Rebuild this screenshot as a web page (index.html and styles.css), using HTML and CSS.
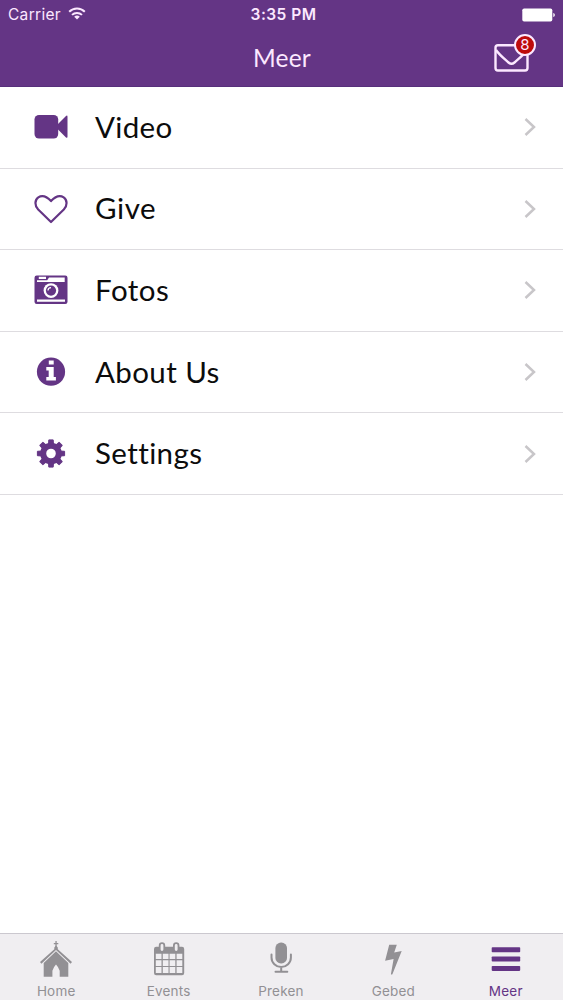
FILE: index.html
```html
<!DOCTYPE html>
<html lang="nl">
<head>
<meta charset="utf-8">
<title>Meer</title>
<link rel="stylesheet" href="styles.css">
</head>
<body>
<div class="screen">
  <header class="header">
    <div class="status">
      <div class="carrier"><span>Carrier</span>
        <svg class="wifi" width="18" height="13" viewBox="0 0 18 13" fill="none" stroke="currentColor" stroke-width="2"><path d="M1.200 4.800a11 11 0 0 1 15.600 0M4 7.900a7.200 7.200 0 0 1 10 0"/><path d="M6.200 9.800a4 4 0 0 1 5.600 0L9 12.500z" fill="currentColor" stroke="none"/></svg>
      </div>
      <div class="time">3:35 PM</div>
      <svg class="battery" width="34" height="14" viewBox="0 0 34 14" fill="currentColor"><rect x="0.300" y="0.500" width="30" height="13" rx="1.800"/><path d="M31.300 5c2 .5 2 3.500 0 4z"/></svg>
    </div>
    <div class="nav">
      <h1 class="title">Meer</h1>
      <button class="mail" aria-label="Mail">
        <svg width="36" height="28" viewBox="0 0 36 28" fill="none" stroke="currentColor" stroke-width="2.400" stroke-linejoin="round"><rect x="1.500" y="1.300" width="32" height="25.200" rx="2.500"/><path d="M2 6c3.500 5 8 8.500 12.500 12.500q3 2.600 6 0C25 14.500 29.500 11 33 6"/></svg>
        <span class="badge">8</span>
      </button>
    </div>
  </header>
  <main class="list">
    <a class="row">
      <svg class="icon" viewBox="0 0 34 34" fill="currentColor"><rect x="0.500" y="5" width="23.700" height="23.500" rx="4.500"/><path d="M23.500 14.500l8.500-8.600q1.500-1 1.500.8v20q0 1.800-1.500.8l-8.500-8.600z"/></svg>
      <span class="label video">Video</span><svg class="chevron" viewBox="0 0 12 20"><path d="M1.500 2l8.500 8-8.500 8"/></svg>
    </a>
    <a class="row">
      <svg class="icon" viewBox="0 0 34 34" fill="none" stroke="currentColor" stroke-width="2.200" stroke-linejoin="round"><path d="M17 30L4.200 17.500C.5 13.700.500 8 4.300 5.300 8.800 2.400 13 4.700 17 9.100 21 4.700 25.200 2.400 29.700 5.300c3.800 2.700 3.800 8.400.1 12.200z"/></svg>
      <span class="label give">Give</span><svg class="chevron" viewBox="0 0 12 20"><path d="M1.500 2l8.500 8-8.500 8"/></svg>
    </a>
    <a class="row">
      <svg class="icon" viewBox="0 0 34 34"><rect x="0.500" y="2.500" width="33" height="28.400" rx="2.200" fill="currentColor"/><path fill="#fff" d="M4.800 3.800H12v2.200H4.800zM15 4.600h15.700v4.500H3V7.300h10.200zM3 26.500h28v2.200H3z"/><circle cx="17" cy="17.600" r="7.400" fill="#fff"/><circle cx="17" cy="17.600" r="5.100" fill="currentColor"/><path d="M14 17.600a3 3 0 0 1 3-3" fill="none" stroke="#fff" stroke-width="1.200"/></svg>
      <span class="label fotos">Fotos</span><svg class="chevron" viewBox="0 0 12 20"><path d="M1.500 2l8.500 8-8.500 8"/></svg>
    </a>
    <a class="row">
      <svg class="icon" viewBox="0 0 34 34"><circle cx="17" cy="16.700" r="14.100" fill="currentColor"/><path fill="#fff" d="M14.800 5.400h4.900v4.200h-4.900zM12.300 12h7.400v10h2.200v3.600h-9.600V22h2.400v-6.400h-2.400z"/></svg>
      <span class="label about">About Us</span><svg class="chevron" viewBox="0 0 12 20"><path d="M1.500 2l8.500 8-8.500 8"/></svg>
    </a>
    <a class="row">
      <svg class="icon" viewBox="0 0 34 34" fill="none" stroke="currentColor"><circle cx="17" cy="16.500" r="7.800" stroke-width="6"/><g fill="currentColor" stroke-width="1" stroke-linejoin="round"><path id="teeth" d="M14.800 2.900h4.400l.3 5h-5zM14.800 30.100h4.400l.3-5h-5zM3.400 14.300v4.400l5 .3v-5zM30.600 14.300v4.400l-5 .3v-5z"/><use href="#teeth" transform="rotate(45 17 16.500)"/></g></svg>
      <span class="label settings">Settings</span><svg class="chevron" viewBox="0 0 12 20"><path d="M1.500 2l8.500 8-8.500 8"/></svg>
    </a>
  </main>
  <nav class="tabs">
    <a class="tab"><svg viewBox="0 0 36 38" fill="currentColor"><path d="M17.400 1h1.300v2h1.600v1.300h-1.600v3h-1.300v-3h-1.600V3h1.600z"/><path d="M16.300 7.500l1.700-2 1.800 2v1.800L34 22.100l-1.400 1.600L18 9.900 3.400 23.700 2 22.100 16.300 9.300z"/><path d="M18 11.300l12.300 11.600v13.900h-8.600v-6q-1-3.500-3.700-6.300-2.700 2.800-3.600 6.300v6H5.700V22.900z"/></svg><span class="home">Home</span></a>
    <a class="tab"><svg viewBox="0 0 36 38"><rect x="3" y="6.700" width="30.200" height="28.500" rx="2.200" fill="currentColor"/><path fill="#f0eef1" d="M4.800 13.800h5.700v5.200H4.800zM11.800 13.800h5.700v5.200h-5.700zM18.600 13.800h5.700v5.200h-5.700zM25.600 13.800h5.700v5.200h-5.700zM4.800 20.200h5.700v5.700H4.800zM11.800 20.200h5.700v5.700h-5.700zM18.600 20.200h5.700v5.700h-5.700zM25.600 20.200h5.700v5.700h-5.700zM4.800 27.100h5.700v6H4.800zM11.800 27.100h5.700v6h-5.700zM18.600 27.100h5.700v6h-5.700zM25.600 27.100h5.700v6h-5.700z"/><g fill="none" stroke-linecap="round"><path d="M11 5.500v4M25.200 5.500v4" stroke="currentColor" stroke-width="6.400"/><path d="M11 5.500v4M25.200 5.500v4" stroke="#f0eef1" stroke-width="2.800"/></g></svg><span class="events">Events</span></a>
    <a class="tab"><svg viewBox="0 0 36 38" fill="none" stroke="currentColor" stroke-width="2"><rect x="12.400" y="2.500" width="11.600" height="21" rx="5.600" fill="currentColor" stroke="none"/><path d="M8.500 14.500v3a9.700 9.500 0 0 0 19.400 0v-3M18.200 27v4M12.500 31.800h11.800" stroke-linecap="round"/></svg><span class="preken">Preken</span></a>
    <a class="tab"><svg viewBox="0 0 36 38" fill="currentColor"><path d="M14.200 4.800h7.600l-2.600 7.800 7.500-1.700-9.300 23.300q-.9.800-1.500 0l2.700-15.300-8.500 1.900z"/></svg><span class="gebed">Gebed</span></a>
    <a class="tab active"><svg viewBox="0 0 36 38" fill="currentColor"><rect x="3.700" y="7.200" width="28.500" height="5" rx=".8"/><rect x="3.700" y="16.500" width="28.500" height="5" rx=".8"/><rect x="3.700" y="25.900" width="28.500" height="5" rx=".8"/></svg><span class="meer">Meer</span></a>
  </nav>
</div>
</body>
</html>
```
FILE: styles.css
```css
* { box-sizing: border-box; }
body { margin: 0; background: #fff; }
.screen { width: 563px; height: 1000px; display: flex; flex-direction: column; overflow: hidden; }
.header { height: 87px; flex: none; background: #643585; border-bottom: 1px solid #57307b; color: #fce8ff; }
.status { height: 28px; display: grid; grid-template-columns: 1fr auto 1fr; align-items: center; padding: 1px 7px 0 8px; font: 15.5px/27px Inter, sans-serif; }
.carrier { display: flex; align-items: center; gap: 7px; letter-spacing: .3px; }
.wifi { margin-bottom: 2px; }
.time { padding-left: 3px; font-weight: 600; letter-spacing: .45px; }
.battery { justify-self: end; color: #fff; }
.nav { height: 59px; display: grid; grid-template-columns: 1fr auto 1fr; align-items: center; padding: 1px 33px 0; }
.title { grid-column: 2; margin: 0; padding-left: 1px; font: 400 24.5px/58px Lato, sans-serif; letter-spacing: .2px; }
.mail { position: relative; justify-self: end; width: 36px; height: 28px; padding: 0; border: 0; background: none; color: #fce8ff; }
.mail svg { display: block; }
.badge { position: absolute; left: 20px; top: -10px; width: 22px; height: 22px; border: 2px solid #fce8ff; border-radius: 50%; background: #bd0b0b; font: 15px/18px Inter, sans-serif; text-align: center; }
.list { flex: 1; }
.row { height: 81.6px; display: grid; grid-template-columns: 34px 1fr 12px; column-gap: 27.5px; align-items: center; padding: 0 27px 0 33.5px; border-bottom: 1px solid #dedce0; color: #643585; }
.icon { width: 34px; height: 34px; display: block; }
.label { padding-bottom: 1px; color: #0c0c0c; font: 400 29.5px/40px Lato, sans-serif; font-variant-ligatures: none; white-space: nowrap; }
.video { letter-spacing: .35px; }
.give { letter-spacing: .6px; }
.fotos { letter-spacing: .5px; }
.about { letter-spacing: .4px; }
.settings { letter-spacing: .4px; }
.chevron { width: 12px; height: 20px; fill: none; stroke: #c8c6c9; stroke-width: 2.5; }
.tabs { height: 67px; flex: none; display: grid; grid-template-columns: repeat(5, 112.4px); background: #f0eef1; border-top: 1px solid #cbc8cf; }
.tab { display: flex; flex-direction: column; align-items: center; padding-top: 6px; color: #929094; font: 13.5px/18px Inter, sans-serif; letter-spacing: .2px; }
.tab svg { width: 36px; height: 38px; margin-bottom: 4px; }
.tab.active { color: #643585; }
```
